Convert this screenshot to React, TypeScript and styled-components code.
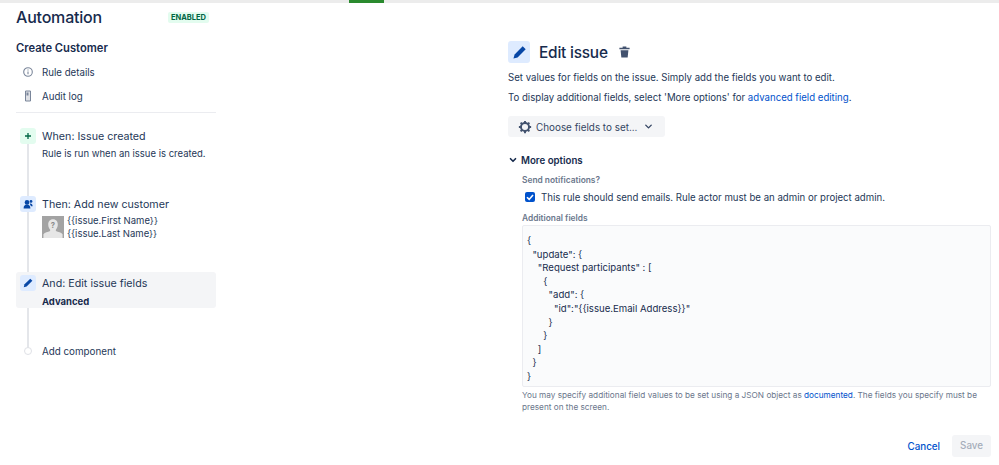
import React from "react"
import styled, { createGlobalStyle } from "styled-components"
import { FiChevronDown } from "react-icons/fi"

const GlobalStyle = createGlobalStyle`
html, body { margin: 0; padding: 0; background: #fff; }
body { font-family: Inter, "Noto Sans", sans-serif; color: #172b4d; overflow: hidden; }
* { box-sizing: border-box; }
`

const PencilIcon = ({ size }: { size: number }) => (
    <svg width={size} height={size} viewBox="0 0 16 16">
        <path d="M11 2.200l2.800 2.800-7.600 7.600-3.900 1.100 1.100-3.900z" fill="#0747a6" />
    </svg>
)

const App = () => {
    return (
        <Page>
            <GlobalStyle />
            <TopBar><Progress /></TopBar>
            <Main>
                <Sidebar>
                    <TitleRow>
                        <Title>Automation</Title>
                        <Lozenge>ENABLED</Lozenge>
                    </TitleRow>
                    <RuleName>Create Customer</RuleName>
                    <NavList>
                        <NavItem>
                            <NavIcon>
                                <svg width="12" height="12" viewBox="0 0 12 12">
                                    <circle cx="5" cy="6" r="4.300" fill="none" stroke="#7a869a" strokeWidth="1.100" />
                                    <path d="M5 5.400v2.800M5 3.500v1" stroke="#7a869a" strokeWidth="1.100" />
                                </svg>
                            </NavIcon>
                            Rule details
                        </NavItem>
                        <NavItem>
                            <NavIcon>
                                <svg width="12" height="12" viewBox="0 0 12 12">
                                    <path d="M2.500 1h5v10h-5z" fill="#dfe1e6" stroke="#7a869a" />
                                    <path d="M3.500 2.500h2v3h-2z" fill="#7a869a" />
                                </svg>
                            </NavIcon>
                            Audit log
                        </NavItem>
                    </NavList>
                    <Divider />
                    <Steps>
                        <Step $height={68}>
                            <StepIcon $bg="#e3fcef">
                                <svg width="10" height="10" viewBox="0 0 10 10">
                                    <path d="M5 2v6M2 5h6" stroke="#006644" strokeWidth="1.300" />
                                </svg>
                            </StepIcon>
                            <StepBody>
                                <StepTitle>When: Issue created</StepTitle>
                                <StepSub>Rule is run when an issue is created.</StepSub>
                            </StepBody>
                        </Step>
                        <Step $height={76}>
                            <StepIcon $bg="#deebff">
                                <svg width="12" height="12" viewBox="0 0 12 12">
                                    <circle cx="5" cy="4.400" r="2.300" fill="#0747a6" />
                                    <circle cx="9" cy="3.400" r="1.400" fill="#0747a6" />
                                    <path d="M1.600 10.600c0-3 1.400-4 3.400-4s3.400 1 3.400 4zM7.600 5.600c1.800-.4 3 .6 3 2.600H9z" fill="#0747a6" />
                                </svg>
                            </StepIcon>
                            <StepBody>
                                <StepTitle>Then: Add new customer</StepTitle>
                                <CustomerRow>
                                    <Avatar>
                                        <svg width="22" height="22" viewBox="0 0 23 23">
                                            <rect width="23" height="23" fill="#a3a3a3" />
                                            <path d="M11.500 3.500c3.400 0 5 2.400 5 5.400 0 2.500-1 4.300-2 5.400v1.500c2.500 1 5.500 1.500 7 3.200V23H1.500v-4c1.500-1.700 4.500-2.200 7-3.200v-1.500c-1-1.100-2-2.900-2-5.400 0-3 1.600-5.400 5-5.400z" fill="#e6e6e6" />
                                            <text x="11.500" y="12.500" fontSize="8" fontWeight="700" textAnchor="middle" fill="#8c8c8c">?</text>
                                        </svg>
                                    </Avatar>
                                    <div>
                                        <StepText>{"{{issue.First Name}}"}</StepText>
                                        <StepText>{"{{issue.Last Name}}"}</StepText>
                                    </div>
                                </CustomerRow>
                            </StepBody>
                        </Step>
                        <ActiveStep>
                            <StepIcon $bg="#deebff"><PencilIcon size={12} /></StepIcon>
                            <StepBody>
                                <StepTitle>And: Edit issue fields</StepTitle>
                                <StepStrong>Advanced</StepStrong>
                            </StepBody>
                        </ActiveStep>
                        <AddStep>
                            <AddDot />
                            Add component
                        </AddStep>
                    </Steps>
                </Sidebar>
                <Panel>
                    <PanelHead>
                        <HeadIcon><PencilIcon size={17} /></HeadIcon>
                        <PanelTitle>Edit issue</PanelTitle>
                        <svg width="13" height="14" viewBox="0 0 14 14">
                            <path d="M1.500 2.500h11v1.600h-11zM5 1h4v1.500H5zM2.800 5h8.400l-.8 8H3.600z" fill="#42526e" />
                        </svg>
                    </PanelHead>
                    <Para>Set values for fields on the issue. Simply add the fields you want to edit.</Para>
                    <Para>To display additional fields, select 'More options' for <Link>advanced field editing</Link>.</Para>
                    <FieldButton>
                        <svg width="14" height="14" viewBox="0 0 16 16">
                            <circle cx="8" cy="8" r="4.600" fill="none" stroke="#42526e" strokeWidth="2.200" />
                            <path d="M8 1v2.500M8 12.500V15M1 8h2.500M12.500 8H15M3 3l1.800 1.800M11.200 11.200L13 13M13 3l-1.800 1.800M4.800 11.200L3 13" stroke="#42526e" strokeWidth="2.200" />
                        </svg>
                        Choose fields to set...
                        <FiChevronDown size={11} strokeWidth={3} />
                    </FieldButton>
                    <MoreRow>
                        <FiChevronDown size={10} strokeWidth={4} />
                        More options
                    </MoreRow>
                    <Options>
                        <FieldLabel>Send notifications?</FieldLabel>
                        <CheckRow>
                            <CheckBox>
                                <svg width="10" height="10" viewBox="0 0 10 10">
                                    <path d="M2 5.200l2.200 2.200L8 3" fill="none" stroke="#fff" strokeWidth="1.600" />
                                </svg>
                            </CheckBox>
                            This rule should send emails. Rule actor must be an admin or project admin.
                        </CheckRow>
                        <FieldLabel>Additional fields</FieldLabel>
                        <CodeBox>{`{
  "update": {
    "Request participants" : [
      {
        "add": {
          "id":"{{issue.Email Address}}"
        }
      }
    ]
  }
}`}</CodeBox>
                        <Hint>
                            <div>You may specify additional field values to be set using a JSON object as <Link>documented</Link>. The fields you specify must be</div>
                            <div>present on the screen.</div>
                        </Hint>
                    </Options>
                    <Actions>
                        <CancelButton>Cancel</CancelButton>
                        <SaveButton>Save</SaveButton>
                    </Actions>
                </Panel>
            </Main>
        </Page>
    )
}

export default App

const Page = styled.div`
width: 999px;
height: 465px;
overflow: hidden;`

const TopBar = styled.div`
height: 3px;
background-color: #ececec;
padding-left: 349px;`

const Progress = styled.div`
width: 35px;
height: 3px;
background-color: #2a8a2e;`

const Main = styled.div`
display: flex;
padding: 0 8px 0 16px;`

const Sidebar = styled.div`
width: 200px;`

const TitleRow = styled.div`
display: flex;
align-items: center;
justify-content: space-between;
width: 193px;
height: 28px;`

const Title = styled.div`
font-size: 16px;
font-weight: 500;
letter-spacing: -0.2px;`

const Lozenge = styled.div`
background-color: #e3fcef;
color: #006644;
font-size: 7.500px;
font-weight: 700;
padding: 1px 3px;
border-radius: 2px;`

const RuleName = styled.div`
font-size: 11.200px;
font-weight: 600;
margin-top: 9px;
height: 16px;
line-height: 16px;`

const NavList = styled.div`
padding-top: 4px;`

const NavItem = styled.div`
display: flex;
align-items: center;
font-size: 9.700px;
color: #253858;
height: 24px;`

const NavIcon = styled.div`
width: 26px;
padding-left: 7px;
display: flex;
align-items: center;`

const Divider = styled.div`
height: 1px;
background-color: #ebecf0;
margin: 4px 0 15px;`

const Steps = styled.div`
position: relative;
&::before {
    content: "";
    position: absolute;
    left: 11px;
    top: 8px;
    bottom: 8px;
    width: 1.500px;
    background-color: #e4e6ea;
}`

const Step = styled.div<{ $height: number }>`
position: relative;
display: flex;
height: ${p => p.$height}px;`

const ActiveStep = styled.div`
position: relative;
display: flex;
height: 36px;
background-color: #f4f5f7;
border-radius: 3px;
padding-top: 3px;`

const StepIcon = styled.div<{ $bg: string }>`
width: 16px;
height: 16px;
margin-left: 4px;
margin-right: 6px;
border-radius: 3px;
background-color: ${p => p.$bg};
display: flex;
align-items: center;
justify-content: center;
flex-shrink: 0;`

const StepBody = styled.div`
display: flex;
flex-direction: column;
padding-top: 1px;`

const StepTitle = styled.div`
font-size: 10.700px;
line-height: 16.500px;
color: #253858;`

const StepText = styled.div`
font-size: 9.500px;
line-height: 13px;
color: #253858;`

const StepSub = styled(StepText)`
margin-top: 1px;`

const StepStrong = styled.div`
font-size: 9.500px;
font-weight: 700;
line-height: 15px;
margin-top: 1px;
color: #172b4d;`

const CustomerRow = styled.div`
display: flex;
align-items: center;
gap: 3px;`

const Avatar = styled.div`
width: 22px;
height: 22px;
display: flex;`

const AddStep = styled.div`
position: relative;
display: flex;
align-items: center;
font-size: 9.800px;
color: #253858;
margin-top: 35px;
height: 16px;`

const AddDot = styled.div`
width: 8px;
height: 8px;
border-radius: 50%;
border: 1px solid #dfe1e6;
background-color: #fff;
margin-left: 8px;
margin-right: 10px;`

const Panel = styled.div`
margin-left: 292px;
width: 483px;
padding-top: 38px;`

const PanelHead = styled.div`
display: flex;
align-items: center;
height: 22px;
margin-bottom: 8px;`

const HeadIcon = styled.div`
width: 22px;
height: 22px;
border-radius: 3px;
background-color: #deebff;
display: flex;
align-items: center;
justify-content: center;
margin-right: 9px;`

const PanelTitle = styled.div`
font-size: 15.400px;
font-weight: 500;
letter-spacing: -0.2px;
margin-right: 10px;`

const Para = styled.p`
font-size: 9.650px;
line-height: 13px;
color: #253858;
margin: 0 0 7px;`

const Link = styled.span`
color: #0052cc;`

const FieldButton = styled.div`
display: flex;
align-items: center;
gap: 4px;
width: 157px;
height: 21px;
padding-left: 10px;
margin-top: 12px;
background-color: #f4f5f7;
border-radius: 3px;
font-size: 9.900px;
color: #344563;
svg:last-child { margin-left: 2px; }`

const MoreRow = styled.div`
display: flex;
align-items: center;
gap: 3px;
font-size: 9.700px;
font-weight: 600;
margin: 15px 0 6px;
height: 16px;`

const Options = styled.div`
padding-left: 14px;`

const FieldLabel = styled.div`
font-size: 8.400px;
font-weight: 600;
color: #6b778c;
height: 12px;
line-height: 12px;`

const CheckRow = styled.div`
display: flex;
align-items: center;
gap: 6px;
padding-left: 3px;
font-size: 9.650px;
height: 22px;
margin-bottom: 4px;
color: #253858;`

const CheckBox = styled.div`
width: 10px;
height: 10px;
border-radius: 2px;
background-color: #0052cc;
display: flex;
align-items: center;
justify-content: center;`

const CodeBox = styled.pre`
margin: 1px 0 0;
height: 162px;
width: 469px;
padding: 8px 4px;
background-color: #fafbfc;
border: 1px solid #ebecf0;
border-radius: 2px;
font-family: Inter, sans-serif;
font-size: 9.600px;
line-height: 13.600px;
color: #172b4d;`

const Hint = styled.div`
font-size: 8.220px;
line-height: 11.500px;
color: #6b778c;
margin-top: 3px;`

const Actions = styled.div`
display: flex;
align-items: center;
justify-content: flex-end;
gap: 12px;
margin-top: 22px;`

const CancelButton = styled.div`
font-size: 9.800px;
font-weight: 500;
color: #0052cc;`

const SaveButton = styled.div`
font-size: 9.800px;
font-weight: 500;
color: #a5adba;
background-color: #f4f5f7;
border-radius: 3px;
padding: 0 8px;
height: 22px;
line-height: 22px;`
